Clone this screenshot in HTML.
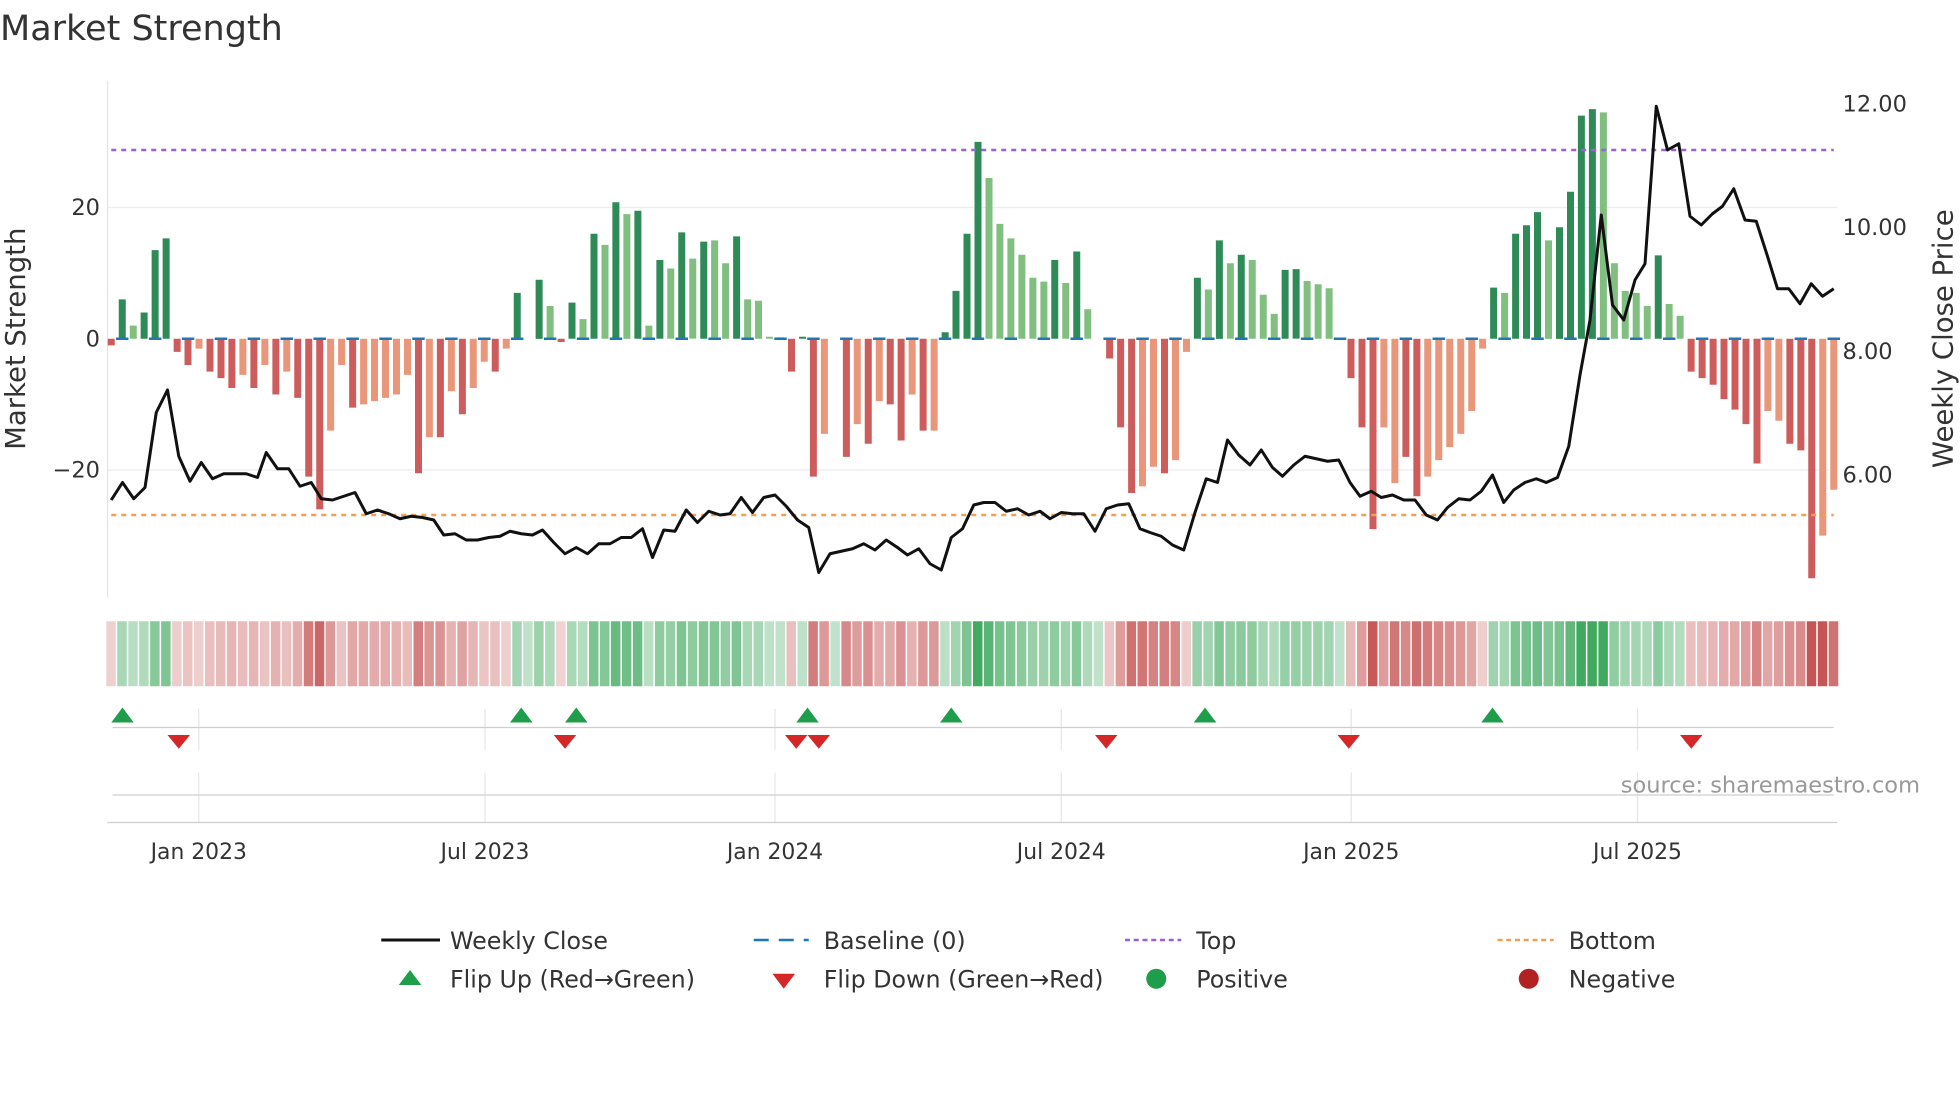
<!DOCTYPE html>
<html><head><meta charset="utf-8"><style>
html,body{margin:0;padding:0;background:#fff;width:1960px;height:1102px;overflow:hidden}
svg{display:block}
text{font-family:"DejaVu Sans","Liberation Sans",sans-serif}
</style></head><body>
<svg id="s" width="1960" height="1102" viewBox="0 0 1568 881.6" xmlns="http://www.w3.org/2000/svg">
<rect width="1568" height="882" fill="#fff"/>
<text x="0" y="32" font-size="28" fill="#333">Market Strength</text>
<g stroke="#ececf2" stroke-width="1">
<line x1="86" y1="166" x2="1470" y2="166"/><line x1="86" y1="376" x2="1470" y2="376"/>
</g>
<line x1="86" y1="65" x2="86" y2="478" stroke="#e4e4e4"/>
<g id="bars"></g>
<g id="heat"></g>
<line x1="89" y1="120" x2="1467" y2="120" stroke="#9b5fe0" stroke-width="2" stroke-dasharray="4,4"/>
<line x1="89" y1="412" x2="1467" y2="412" stroke="#f0a050" stroke-width="2" stroke-dasharray="4,4"/>
<polyline id="price" fill="none" stroke="#111" stroke-width="2.4" stroke-linejoin="round"/>
<g font-size="18" fill="#333">
<text x="80" y="172" text-anchor="end">20</text>
<text x="80" y="277" text-anchor="end">0</text>
<text x="80" y="382" text-anchor="end">−20</text>
<text x="1474" y="89">12.00</text>
<text x="1474" y="188">10.00</text>
<text x="1474" y="287">8.00</text>
<text x="1474" y="386">6.00</text>
<text transform="translate(20,271) rotate(-90)" text-anchor="middle" font-size="22">Market Strength</text>
<text transform="translate(1562,271) rotate(-90)" text-anchor="middle" font-size="22">Weekly Close Price</text>
</g>
<g id="grid" stroke="#e6e6e6"></g>
<line x1="90" y1="582" x2="1467" y2="582" stroke="#cfcfcf"/>
<line x1="90" y1="636" x2="1467" y2="636" stroke="#cfcfcf"/>
<line x1="86" y1="658" x2="1470" y2="658" stroke="#cfcfcf"/>
<g id="marks"></g>
<text x="1536" y="634" font-size="18" fill="#999" text-anchor="end">source: sharemaestro.com</text>
<g font-size="17.5" fill="#333" text-anchor="middle">
<text x="159" y="687">Jan 2023</text><text x="388" y="687">Jul 2023</text><text x="620" y="687">Jan 2024</text>
<text x="849" y="687">Jul 2024</text><text x="1081" y="687">Jan 2025</text><text x="1310" y="687">Jul 2025</text>
</g>
<g font-size="19" fill="#333">
<line x1="305" y1="752" x2="352" y2="752" stroke="#111" stroke-width="2.4"/><text x="360" y="759">Weekly Close</text>
<line x1="603" y1="752" x2="647" y2="752" stroke="#1f77b4" stroke-width="2" stroke-dasharray="12,8"/><text x="659" y="759">Baseline (0)</text>
<line x1="900" y1="752" x2="945" y2="752" stroke="#9b5fe0" stroke-width="2" stroke-dasharray="4,3"/><text x="957" y="759">Top</text>
<line x1="1198" y1="752" x2="1243" y2="752" stroke="#f0a050" stroke-width="2" stroke-dasharray="4,3"/><text x="1255" y="759">Bottom</text>
<polygon points="319,788 337,788 328,776" fill="#1e9e4a"/><text x="360" y="790">Flip Up (Red→Green)</text>
<polygon points="618,779 636,779 627,791" fill="#d62728"/><text x="659" y="790">Flip Down (Green→Red)</text>
<circle cx="925" cy="783" r="8" fill="#1e9e4a"/><text x="957" y="790">Positive</text>
<circle cx="1223" cy="783" r="8" fill="#b22222"/><text x="1255" y="790">Negative</text>
</g>
</svg>
<script>
var v=[[-1,0],[6,0],[2,1],[4,0],[13.5,0],[15.3,0],[-2,0],[-4,0],[-1.5,1],[-5,0],[-6,0],[-7.5,0],[-5.5,1],[-7.5,0],[-4,1],[-8.5,0],[-5,1],[-9,0],[-21,0],[-26,0],[-14,1],[-4,1],[-10.5,0],[-10,1],[-9.5,1],[-9,1],[-8.5,1],[-5.5,1],[-20.5,0],[-15,1],[-15,0],[-8,1],[-11.5,0],[-7.5,1],[-3.5,1],[-5,0],[-1.5,1],[7,0],[0,0],[9,0],[5,1],[-0.5,0],[5.5,0],[3,1],[16,0],[14.3,1],[20.8,0],[19,1],[19.5,0],[2,1],[12,0],[10.7,1],[16.2,0],[12.2,1],[14.8,0],[15,1],[11.5,1],[15.6,0],[6,1],[5.8,1],[0.3,1],[0.2,0],[-5,0],[0.3,0],[-21,0],[-14.5,1],[0,0],[-18,0],[-13,1],[-16,0],[-9.5,1],[-10,0],[-15.5,0],[-8.5,1],[-14,0],[-14,1],[1,0],[7.3,0],[16,0],[30,0],[24.5,1],[17.5,1],[15.3,1],[12.8,1],[9.3,1],[8.7,1],[12,0],[8.5,1],[13.3,0],[4.5,1],[0,0],[-3,0],[-13.5,0],[-23.5,0],[-22.5,1],[-19.5,1],[-20.5,0],[-18.5,1],[-2,1],[9.3,0],[7.5,1],[15,0],[11.5,1],[12.8,0],[12,1],[6.7,1],[3.8,1],[10.5,0],[10.6,0],[8.8,1],[8.3,1],[7.7,1],[0,0],[-6,0],[-13.5,0],[-29,0],[-13.5,1],[-22,1],[-18,0],[-24,0],[-21,1],[-18.5,1],[-16.5,1],[-14.5,1],[-11,1],[-1.5,1],[7.8,0],[7,1],[16,0],[17.3,0],[19.3,0],[15,1],[17,0],[22.4,0],[34,0],[35,0],[34.5,1],[11.5,1],[7.3,1],[7,1],[5,1],[12.7,0],[5.3,1],[3.5,1],[-5,0],[-6,0],[-7,0],[-9.2,0],[-10.8,0],[-13,0],[-19,0],[-11,1],[-12.5,1],[-16,0],[-17,0],[-36.5,0],[-30,1],[-23,1]];
var n=v.length,x0=89,x1=1467,dx=(x1-x0)/(n-1),B='',H='';
for(var i=0;i<n;i++){var x=x0+i*dx,a=v[i][0],l=v[i][1],h=Math.abs(a)*5.25;
var c=a>=0?(l?'#80bf80':'#2e8b57'):(l?'#e9967a':'#cd5c5c');
if(h>0.5)B+='<rect x="'+(x-2.8).toFixed(1)+'" y="'+(a>=0?271-h:271).toFixed(1)+'" width="5.6" height="'+h.toFixed(1)+'" fill="'+c+'"/>';
if(i%3==1)B+='<line x1="'+(x-5)+'" y1="271" x2="'+(x+5)+'" y2="271" stroke="#1f77b4" stroke-width="2"/>';
var t=Math.min(1,Math.abs(a)/30),hc;
if(a>=0){hc='rgba(46,160,80,'+(0.3+0.6*t).toFixed(2)+')';}else{hc='rgba(190,60,60,'+(0.22+0.65*t).toFixed(2)+')';}
H+='<rect x="'+(x-4).toFixed(1)+'" y="497" width="'+(dx-1.2).toFixed(1)+'" height="52" fill="'+hc+'"/>';}
document.getElementById('bars').innerHTML=B;document.getElementById('heat').innerHTML=H;
var p=[89,400,98,386,107,399,116,390,125,330,134,312,143,365,152,385,161,370,170,383,179,379,188,379,197,379,206,382,213,362,222,375,231,375,240,389,249,386,257,399,266,400,275,397,284,394,293,411,302,408,311,411,320,415,329,413,338,414,347,416,355,428,364,427,373,432,382,432,391,430,400,429,408,425,417,427,426,428,434,424,443,434,452,443,461,438,470,443,479,435,488,435,497,430,505,430,514,423,522,446,531,424,540,425,549,408,558,418,567,409,576,412,584,411,593,398,602,410,611,398,620,396,629,405,638,416,647,422,655,458,664,443,673,441,682,439,691,435,700,440,709,432,718,438,726,444,735,439,744,451,753,456,761,430,770,423,779,404,787,402,796,402,805,409,814,407,823,412,832,409,840,415,849,410,858,411,867,411,876,425,885,407,894,404,903,403,912,423,920,426,929,429,938,436,947,440,956,410,965,383,974,386,982,352,991,364,1000,372,1009,360,1018,374,1026,381,1035,372,1044,365,1053,367,1062,369,1071,368,1080,386,1088,397,1097,393,1105,398,1114,396,1123,400,1132,400,1141,412,1150,416,1158,406,1167,399,1176,400,1185,393,1194,380,1203,402,1211,392,1220,386,1229,383,1237,386,1246,382,1255,357,1264,300,1272,256,1281,172,1290,244,1299,256,1308,224,1316,211,1325,85,1334,120,1343,115,1352,173,1361,180,1370,171,1378,165,1387,151,1396,176,1405,177,1414,205,1422,231,1431,231,1440,243,1449,227,1458,237,1467,231];
var s='';for(var j=0;j<p.length;j+=2)s+=p[j]+','+p[j+1]+' ';document.getElementById('price').setAttribute('points',s);
var G='';[159,388,620,849,1081,1310].forEach(function(x){G+='<line x1="'+x+'" y1="567" x2="'+x+'" y2="600"/><line x1="'+x+'" y1="618" x2="'+x+'" y2="658"/>';});
document.getElementById('grid').innerHTML=G;
var M='';[98,417,461,646,761,964,1194].forEach(function(x){M+='<polygon points="'+(x-9)+',578 '+(x+9)+',578 '+x+',566" fill="#1e9e4a"/>';});
[143,452,637,655,885,1079,1353].forEach(function(x){M+='<polygon points="'+(x-9)+',588 '+(x+9)+',588 '+x+',599" fill="#d62728"/>';});
document.getElementById('marks').innerHTML=M;
</script>
</body></html>
